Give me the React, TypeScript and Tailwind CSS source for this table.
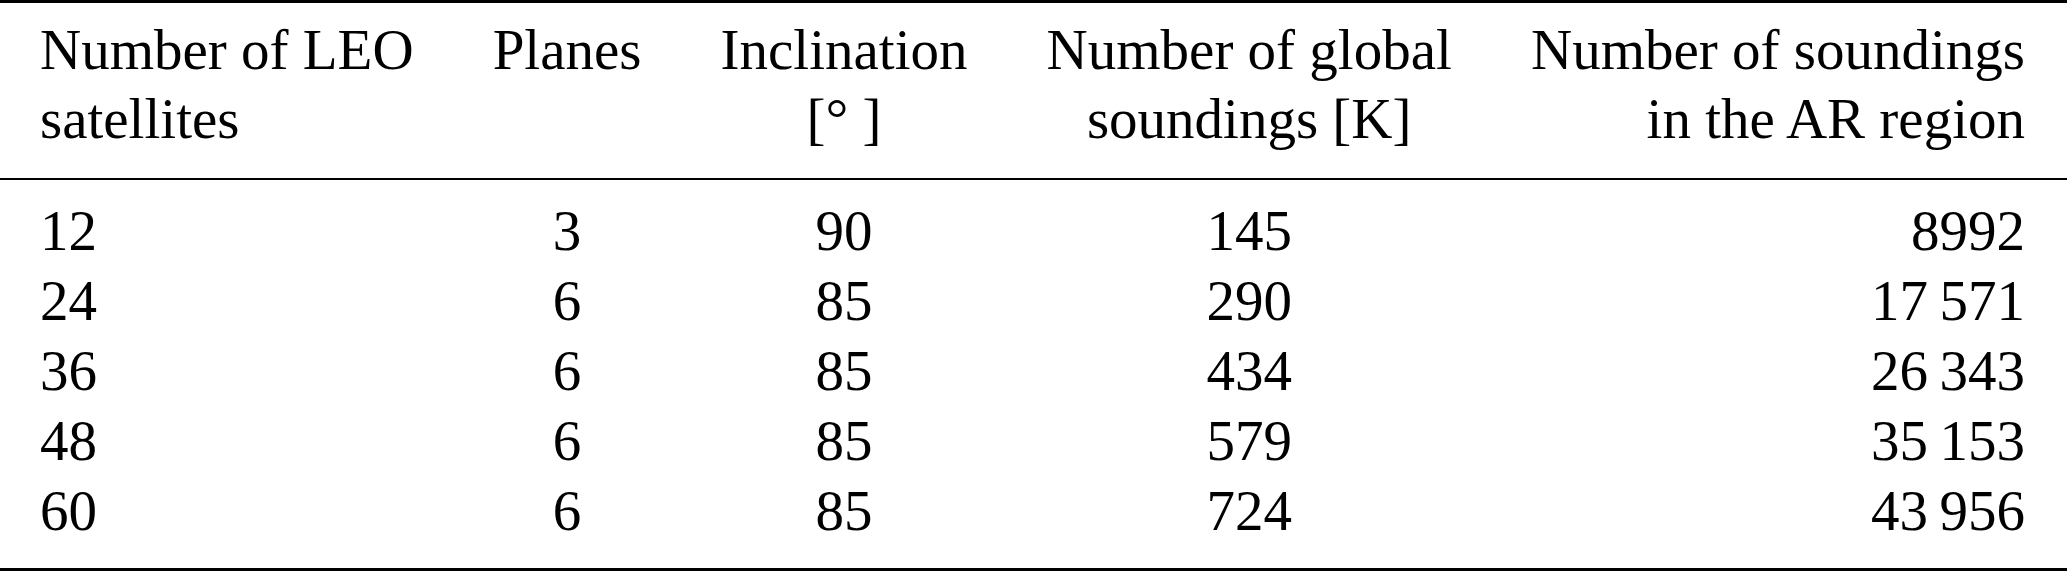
const rows = [
  ["12", "3", "90", "145", "8992"],
  ["24", "6", "85", "290", "17\u2009571"],
  ["36", "6", "85", "434", "26\u2009343"],
  ["48", "6", "85", "579", "35\u2009153"],
  ["60", "6", "85", "724", "43\u2009956"],
];

export default function App() {
  return (
    <div className="bg-white w-[2067px] h-[572px] overflow-hidden text-black font-['Liberation_Serif',serif] text-[57px]">
      <table className="w-full border-collapse border-t-[3px] border-b-[3px] border-black">
        <thead>
          <tr className="border-b-[2px] border-black leading-[69px] whitespace-nowrap">
            <th className="font-normal text-left pl-[40px] pr-[39.5px] pt-[12px] pb-[25px] align-top">
              Number of LEO
              <br />
              satellites
            </th>
            <th className="font-normal text-center px-[39.5px] pt-[12px] pb-[25px] align-top">Planes</th>
            <th className="font-normal text-center px-[39.5px] pt-[12px] pb-[25px] align-top">
              Inclination
              <br />
              [° ]
            </th>
            <th className="font-normal text-center px-[39.5px] pt-[12px] pb-[25px] align-top">
              Number of global
              <br />
              soundings [K]
            </th>
            <th className="font-normal text-right pl-[39.5px] pr-[42px] pt-[12px] pb-[25px] align-top">
              Number of soundings
              <br />
              in the AR region
            </th>
          </tr>
        </thead>
        <tbody className="leading-[70px] whitespace-nowrap">
          {rows.map((r, i) => {
            const pad = i === 0 ? "pt-[16px]" : i === rows.length - 1 ? "pb-[22px]" : "";
            return (
              <tr key={i}>
                <td className={`text-left pl-[40px] ${pad}`}>{r[0]}</td>
                <td className={`text-center ${pad}`}>{r[1]}</td>
                <td className={`text-center ${pad}`}>{r[2]}</td>
                <td className={`text-center ${pad}`}>{r[3]}</td>
                <td className={`text-right pr-[42px] ${pad}`}>{r[4]}</td>
              </tr>
            );
          })}
        </tbody>
      </table>
    </div>
  );
}
